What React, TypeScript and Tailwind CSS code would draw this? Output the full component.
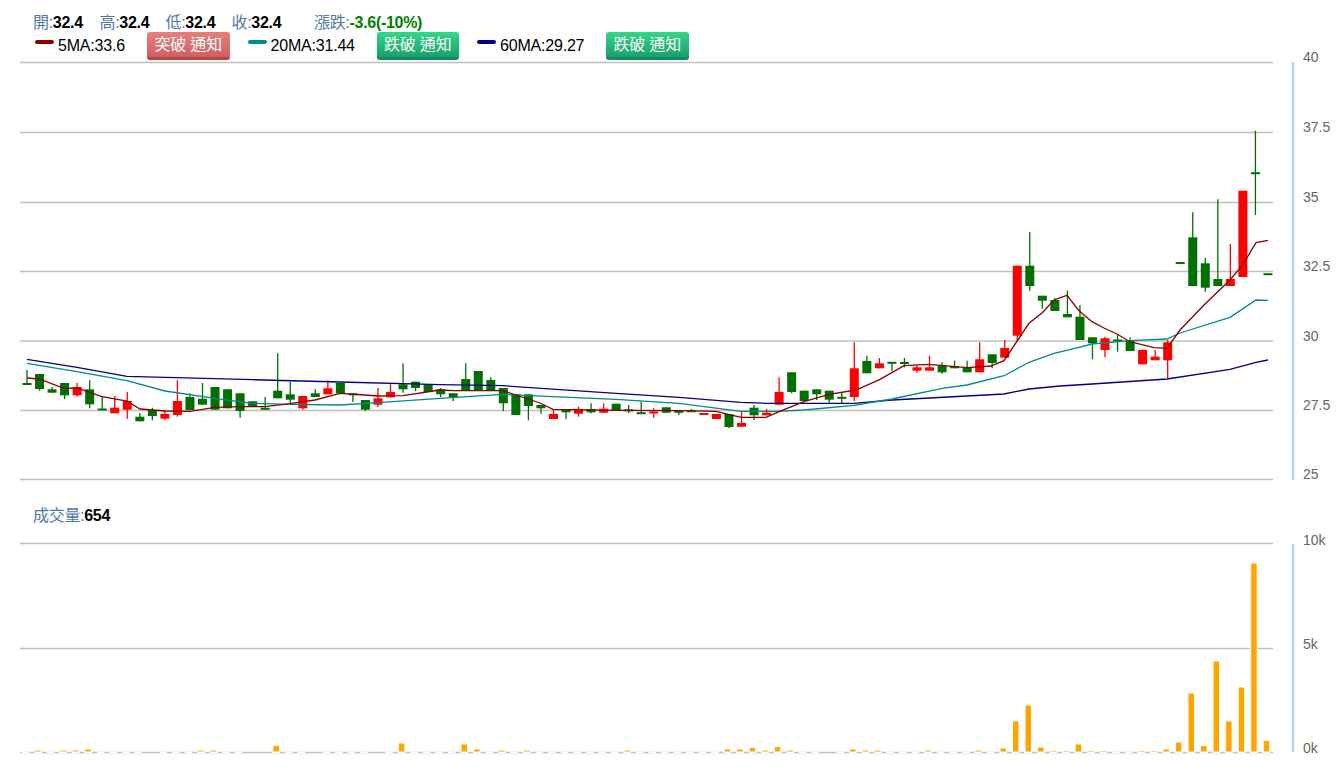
const RED = '#ff0000';
const GREEN = '#007000';

// [wick top, body top, body bottom, wick bottom, up?] in page pixels
const candles: [number, number, number, number, number][] = [
  [370, 383, 385, 385, 0],
  [374, 374, 389, 390.7, 0],
  [387, 389.3, 392.7, 392.7, 0],
  [383, 383, 395.3, 399, 0],
  [383, 387, 395.3, 396.7, 1],
  [380.3, 389.3, 404.3, 408.3, 0],
  [396, 409, 410, 410, 0],
  [396, 407.7, 413.3, 413.3, 1],
  [392, 401, 409.7, 418.7, 1],
  [413, 416.7, 421.3, 421.3, 0],
  [407.7, 410, 416, 420.3, 0],
  [410.7, 414, 418.7, 420.3, 1],
  [380.3, 401, 415, 416.7, 1],
  [393.3, 397, 410, 410, 0],
  [383, 398.7, 404.7, 404.7, 0],
  [387, 387, 409.7, 409.7, 0],
  [389.3, 389.3, 408.3, 408.3, 0],
  [393.3, 393.3, 411, 417.7, 0],
  [401.3, 401.3, 406, 406, 0],
  [397, 408.3, 409.7, 409.7, 0],
  [353.3, 390.7, 398.3, 398.3, 0],
  [381.7, 394.3, 399.7, 403.3, 0],
  [396, 396, 408.3, 409.7, 1],
  [389.3, 393.3, 397, 397, 0],
  [380.3, 388.3, 394.3, 394.3, 1],
  [383, 383, 393.3, 393.3, 0],
  [393.3, 393.3, 395.3, 402, 0],
  [400, 400, 409.7, 411, 0],
  [388, 398.3, 404.7, 407, 1],
  [384.3, 392, 397.3, 397.3, 1],
  [363.3, 384.3, 389.3, 392.7, 0],
  [381.7, 381.7, 388, 391, 0],
  [384.3, 384.3, 392, 392, 0],
  [388, 389.3, 394.3, 397, 0],
  [393.3, 393.3, 397, 401, 0],
  [363.3, 379, 390.7, 390.7, 0],
  [371, 371, 390.7, 390.7, 0],
  [377.3, 380, 390.7, 390.7, 0],
  [388, 388, 403.3, 411.3, 0],
  [394.3, 394.3, 415, 415, 0],
  [394.3, 394.3, 406, 420.3, 0],
  [405, 405, 408.3, 413.7, 0],
  [409.7, 414, 419, 419, 1],
  [409.7, 409.7, 412.3, 419, 0],
  [406.7, 409, 413.7, 416.7, 1],
  [403.3, 409, 412.3, 413.3, 0],
  [403.3, 408.7, 412.7, 412.7, 1],
  [403.7, 403.7, 411, 411, 0],
  [405, 409.3, 411.3, 413.3, 0],
  [401.7, 412.7, 413.7, 413.7, 0],
  [408.3, 412, 413.7, 417.7, 1],
  [407.3, 407.3, 412.7, 412.7, 0],
  [411.3, 411.3, 412.3, 415, 0],
  [409, 410.7, 411.3, 411.3, 0],
  [413, 413, 415, 415, 1],
  [414, 414, 419, 419, 1],
  [414, 414, 427, 428, 0],
  [411.3, 423, 426.7, 426.7, 1],
  [405, 407.7, 415.3, 420, 0],
  [409, 412.7, 415.3, 415.3, 1],
  [377.3, 392, 404.7, 404.7, 1],
  [372.3, 372.3, 392, 393.3, 0],
  [390.7, 390.7, 401, 401, 0],
  [389.3, 389.3, 394.3, 400, 0],
  [390.7, 390.7, 399.7, 402.7, 0],
  [393, 397.3, 398.3, 403.3, 0],
  [342.3, 368.3, 397, 401, 1],
  [355.7, 361, 373.3, 373.3, 0],
  [358, 363.3, 368.3, 368.3, 1],
  [362.3, 362.3, 363, 371, 0],
  [358, 362.5, 363.3, 367.3, 0],
  [365.7, 367.3, 370.7, 372.7, 1],
  [355.7, 367.3, 370.7, 370.7, 1],
  [362.3, 365.7, 372.3, 373.7, 0],
  [360.7, 366.3, 368.3, 368.3, 0],
  [360.7, 368, 372.3, 372.3, 0],
  [342.3, 359.3, 372.3, 372.3, 1],
  [354.3, 354.3, 363, 368.3, 0],
  [340, 348, 357.7, 357.7, 1],
  [265.7, 265.7, 335.7, 340.7, 1],
  [232, 265.7, 286, 290.7, 0],
  [295.7, 295.7, 300.7, 308.7, 0],
  [298.3, 300, 311, 311, 0],
  [290.7, 314, 317.3, 317.3, 0],
  [305, 316.7, 340, 340, 0],
  [337.3, 337.3, 343.3, 359.3, 0],
  [336.7, 338.3, 350, 357.3, 1],
  [335, 340, 341.7, 351.7, 0],
  [337.3, 341, 351, 351, 0],
  [349.5, 350, 364.3, 364.3, 1],
  [350, 356.7, 360.3, 360.3, 1],
  [340, 342.3, 360.3, 378.3, 1],
  [262.5, 262.5, 263, 263, 0],
  [212.3, 237.3, 286, 286, 0],
  [258, 263.3, 287.7, 291.7, 0],
  [199.3, 279, 286, 286, 0],
  [244, 279, 286, 286, 1],
  [190.7, 190.7, 277, 277, 1],
  [130.7, 172.7, 174, 215, 0],
  [273.7, 273.7, 274.7, 274.7, 0],
];

const ma5: [number, number][] = [[27, 378], [39, 379], [64, 388.3], [77, 388], [102, 396.7], [127, 401], [140, 409], [165, 411], [190, 411.3], [215, 407.3], [240, 406.7], [265, 406.7], [290, 403.7], [315, 400], [340, 393.3], [365, 395], [378, 396], [403, 395.7], [440, 390], [453, 390.7], [503, 390.7], [540, 403], [553, 409.3], [616, 410.3], [679, 410.7], [716, 411.3], [741, 417.3], [766, 417.3], [779, 411.7], [804, 401.7], [829, 394.3], [856, 390], [880, 379.3], [904, 365.7], [929, 364.3], [967, 367.7], [991, 366], [1004, 360.7], [1029, 323.3], [1042, 313], [1054, 300], [1067, 295.3], [1079, 310.7], [1092, 321.7], [1104, 328], [1117, 334], [1130, 341.7], [1154, 347.7], [1167, 348.3], [1180, 330], [1204, 305], [1230, 280], [1243, 264.3], [1256, 242.7], [1268, 240.3]];
const ma20: [number, number][] = [[27, 363.3], [77, 371.7], [127, 380.7], [165, 391], [215, 398.3], [252, 403.3], [290, 404.3], [340, 405], [378, 402.7], [440, 398.3], [503, 394.3], [553, 396.7], [616, 399.3], [679, 403.3], [741, 411.3], [779, 411.3], [804, 410], [854, 405.3], [892, 399], [942, 388.3], [967, 385], [1004, 375.7], [1029, 362.3], [1054, 353.3], [1079, 347.3], [1092, 344], [1130, 340.7], [1167, 339], [1180, 333], [1230, 317.3], [1256, 300], [1268, 300.3]];
const ma60: [number, number][] = [[27, 359.3], [77, 367.3], [127, 376.3], [253, 379.7], [340, 382], [440, 384.7], [503, 385.7], [616, 393.3], [679, 397.3], [741, 402.3], [766, 403.3], [854, 403.3], [892, 400], [1004, 394], [1029, 389], [1060, 386], [1092, 384], [1167, 379], [1230, 369.3], [1256, 362.3], [1268, 360]];

const volumes: Record<number, number> = {
  1: 2, 3: 2, 4: 2, 5: 3, 14: 2, 15: 2, 20: 6.7, 30: 9, 35: 8, 36: 3, 38: 2, 40: 2, 48: 2,
  56: 3, 57: 3, 58: 4.5, 59: 2, 60: 5.5, 61: 2, 66: 3, 67: 2, 68: 2, 72: 2, 76: 2,
  78: 4, 79: 31, 80: 47, 81: 5, 82: 1.5, 83: 1.5, 84: 8, 85: 1.5, 86: 1.5, 89: 1.5, 90: 1.5,
  91: 3, 92: 10, 93: 59, 94: 6.5, 95: 91, 96: 31, 97: 65, 98: 189, 99: 11.7,
};
const noVolume = [10, 18, 19, 23, 28, 64];

const priceTicks = [
  { y: 62.5, label: '40' },
  { y: 132.5, label: '37.5' },
  { y: 202.5, label: '35' },
  { y: 271.5, label: '32.5' },
  { y: 341, label: '30' },
  { y: 410.5, label: '27.5' },
  { y: 479.5, label: '25' },
];
const volumeTicks = [
  { y: 543.5, label: '10k', labelY: 545 },
  { y: 648.5, label: '5k', labelY: 649 },
  { y: 752.5, label: '0k', labelY: 752.5 },
];

const quotes = [
  { label: '開', value: '32.4', width: 'w-[66.5px]' },
  { label: '高', value: '32.4', width: 'w-[66px]' },
  { label: '低', value: '32.4', width: 'w-[66px]' },
  { label: '收', value: '32.4', width: 'w-[82.5px]' },
];

const candleX = (i: number) => 27 + 12.535 * i;
const toPoints = (line: [number, number][]) => line.map(([x, y]) => `${x},${y}`).join(' ');

function Notify({ text, tone }: { text: string; tone: 'red' | 'green' }) {
  const look =
    tone === 'red'
      ? 'from-[#e58080] to-[#d25f5f] border-b-[#b44545]'
      : 'from-[#35d68a] to-[#17a169] border-b-[#158a5c]';
  return (
    <button
      className={`mr-[18px] h-[28px] w-[82.5px] rounded-[3px] border-b-[3px] bg-gradient-to-b text-[16px] leading-[24px] tracking-[-0.2px] text-white ${look}`}
    >
      {text}
    </button>
  );
}

function MaLegend({ color, text, width }: { color: string; text: string; width: string }) {
  return (
    <div className={`flex items-center ${width}`}>
      <span className={`mb-[9px] h-[4px] w-[19px] rounded-[2px] ${color}`} />
      <span className="ml-[4px] text-[16px] tracking-[-0.2px] text-black">{text}</span>
    </div>
  );
}

function PriceChart() {
  return (
    <svg className="block overflow-visible" width={1343} height={435} viewBox="0 55 1343 435">
      {priceTicks.map((t) => (
        <g key={t.label}>
          <line x1={20} x2={1273} y1={t.y} y2={t.y} stroke="#c0c0c0" strokeWidth={1.3} />
          <text x={1303} y={t.y - 0.5} fill="#666666" fontSize={14}>
            {t.label}
          </text>
        </g>
      ))}
      <line x1={1293} x2={1293} y1={62} y2={480} stroke="#c0d0e0" strokeWidth={2.5} />
      {candles.map(([hi, top, bottom, lo, up], i) => {
        const x = candleX(i);
        const color = up ? RED : GREEN;
        const thin = bottom - top < 2;
        return (
          <g key={i}>
            <line x1={x} x2={x} y1={hi} y2={lo} stroke={color} strokeWidth={1.3} />
            <rect
              x={x - 4.5}
              y={thin ? top - 0.5 : top}
              width={9}
              height={thin ? 2 : bottom - top}
              fill={color}
            />
          </g>
        );
      })}
      <polyline points={toPoints(ma60)} fill="none" stroke="#00008b" strokeWidth={1.3} />
      <polyline points={toPoints(ma20)} fill="none" stroke="#008b8b" strokeWidth={1.3} />
      <polyline points={toPoints(ma5)} fill="none" stroke="#8b0000" strokeWidth={1.3} />
    </svg>
  );
}

function VolumeChart() {
  return (
    <svg className="block overflow-visible" width={1343} height={237} viewBox="0 535 1343 237">
      {volumeTicks.map((t) => (
        <g key={t.label}>
          <line x1={20} x2={1273} y1={t.y} y2={t.y} stroke="#c0c0c0" strokeWidth={1.3} />
          <text x={1303} y={t.labelY} fill="#666666" fontSize={14}>
            {t.label}
          </text>
        </g>
      ))}
      <line x1={20} x2={1273} y1={753.8} y2={753.8} stroke="#eeeeee" />
      <line x1={1293} x2={1293} y1={544} y2={752} stroke="#c0d0e0" strokeWidth={2.5} />
      {candles.map((_, i) => {
        if (noVolume.includes(i)) return null;
        const x = candleX(i) - 1.5;
        const h = volumes[i];
        return (
          <g key={i}>
            {/* every bar, even an empty one, cuts the baseline with its white border */}
            <rect x={x - 3.75} y={751.6} width={7.5} height={1.7} fill="#ffffff" />
            {h && (
              <rect x={x - 3.25} y={752 - h} width={6.5} height={h} fill="#ffa500" stroke="#ffffff" />
            )}
          </g>
        );
      })}
    </svg>
  );
}

export default function App() {
  return (
    <div className="h-[772px] w-[1343px] overflow-hidden bg-white font-['Liberation_Sans','Noto_Sans_CJK_TC',sans-serif]">
      <div className="h-[55px] pl-[33px] pt-[13px]">
        <div className="flex h-[19px] items-center text-[16px] leading-[19px] tracking-[-0.3px] text-[#4f78ad]">
          {quotes.map((q) => (
            <span key={q.label} className={q.width}>
              {q.label}:<b className="text-black">{q.value}</b>
            </span>
          ))}
          <span>
            漲跌:<b className="text-[#008000]">-3.6(-10%)</b>
          </span>
        </div>
        <div className="ml-[2px] flex h-[28px] items-center">
          <MaLegend color="bg-[#8b0000]" text="5MA:33.6" width="w-[112px]" />
          <Notify text="突破 通知" tone="red" />
          <MaLegend color="bg-[#008b8b]" text="20MA:31.44" width="w-[129px]" />
          <Notify text="跌破 通知" tone="green" />
          <MaLegend color="bg-[#00008b]" text="60MA:29.27" width="w-[129px]" />
          <Notify text="跌破 通知" tone="green" />
        </div>
      </div>
      <PriceChart />
      <div className="h-[45px] pl-[33px] pt-[16px] text-[16px] leading-[19px] tracking-[-0.3px] text-[#4f78ad]">
        成交量:<b className="text-black">654</b>
      </div>
      <VolumeChart />
    </div>
  );
}
